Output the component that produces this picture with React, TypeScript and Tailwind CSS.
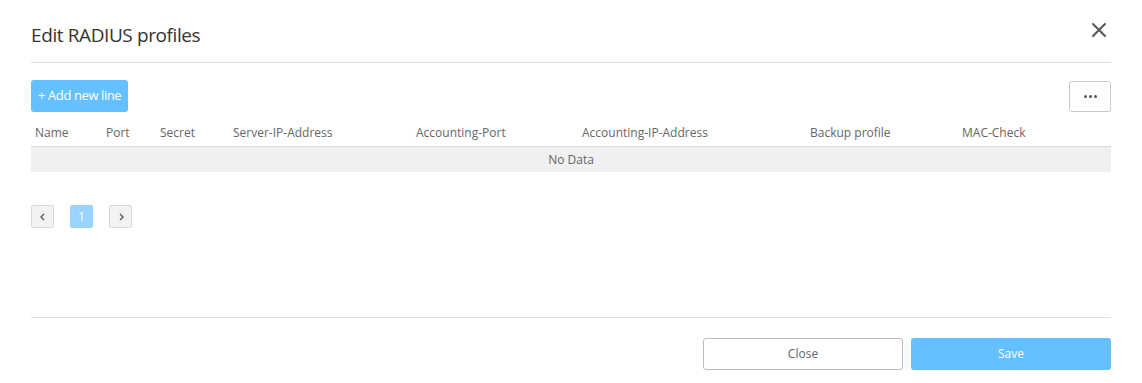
import React from "react";

const columns = [
  "Name",
  "Port",
  "Secret",
  "Server-IP-Address",
  "Accounting-Port",
  "Accounting-IP-Address",
  "Backup profile",
  "MAC-Check",
];

export default function App() {
  return (
    <div
      className="h-[383px] w-[1142px] bg-white px-[31px] text-[#555]"
      style={{ fontFamily: "'Open Sans', 'Liberation Sans', sans-serif" }}
    >
      <div className="flex h-[63px] items-start justify-between border-b border-[#dcdcdc]">
        <h1 className="pt-[21px] text-[19px] leading-[28px] tracking-[-0.4px] text-[#333]">
          Edit RADIUS profiles
        </h1>
        <button type="button" className="mr-[4px] mt-[22px] text-[#555]" aria-label="Close">
          <svg width="16" height="16" viewBox="0 0 16 16">
            <path d="M2 2 L14 14 M14 2 L2 14" stroke="#555" strokeWidth="2" strokeLinecap="round" />
          </svg>
        </button>
      </div>

      <div className="mt-[17px] flex items-center justify-between">
        <button
          type="button"
          className="h-[32px] rounded-[3px] bg-[#64c0ff] px-[7px] text-[13px] tracking-[-0.4px] text-white"
        >
          + Add new line
        </button>
        <button
          type="button"
          className="flex h-[31px] w-[42px] items-center justify-center rounded-[3px] border border-[#c8c8c8] bg-white"
        >
          <span className="flex gap-[2px]">
            <span className="h-[3px] w-[3px] rounded-full bg-[#555]" />
            <span className="h-[3px] w-[3px] rounded-full bg-[#555]" />
            <span className="h-[3px] w-[3px] rounded-full bg-[#555]" />
          </span>
        </button>
      </div>

      <div className="mt-[14px] grid h-[21px] grid-cols-[71px_54px_73px_183px_166px_228px_152px_1fr] border-b border-[#dcdcdc] text-[12px] text-[#666]">
        {columns.map((c) => (
          <div key={c} className="pl-[4px] leading-[14px]">
            {c}
          </div>
        ))}
      </div>
      <div className="flex h-[25px] items-center justify-center bg-[#f0f0f0] text-[12px] text-[#666]">
        No Data
      </div>

      <div className="mt-[33px] flex gap-[16px]">
        <button
          type="button"
          className="flex h-[23px] w-[23px] items-center justify-center rounded-[2px] border border-[#d9d9d9] bg-[#f2f2f2]"
        >
          <svg width="10" height="10" viewBox="0 0 10 10">
            <path d="M6 2 L3 5 L6 8" stroke="#555" strokeWidth="1.3" fill="none" />
          </svg>
        </button>
        <button
          type="button"
          className="flex h-[23px] w-[23px] items-center justify-center rounded-[2px] bg-[#99d3ff] text-[12px] text-white"
        >
          1
        </button>
        <button
          type="button"
          className="flex h-[23px] w-[23px] items-center justify-center rounded-[2px] border border-[#d9d9d9] bg-[#f2f2f2]"
        >
          <svg width="10" height="10" viewBox="0 0 10 10">
            <path d="M4 2 L7 5 L4 8" stroke="#555" strokeWidth="1.3" fill="none" />
          </svg>
        </button>
      </div>

      <div className="mt-[89px] border-t border-[#dcdcdc]" />

      <div className="mt-[20px] flex justify-end gap-[8px]">
        <button
          type="button"
          className="h-[32px] w-[200px] rounded-[3px] border border-[#bdbdbd] bg-white text-[12px] text-[#666]"
        >
          Close
        </button>
        <button
          type="button"
          className="h-[32px] w-[200px] rounded-[3px] bg-[#64c0ff] text-[12px] text-white"
        >
          Save
        </button>
      </div>
    </div>
  );
}
